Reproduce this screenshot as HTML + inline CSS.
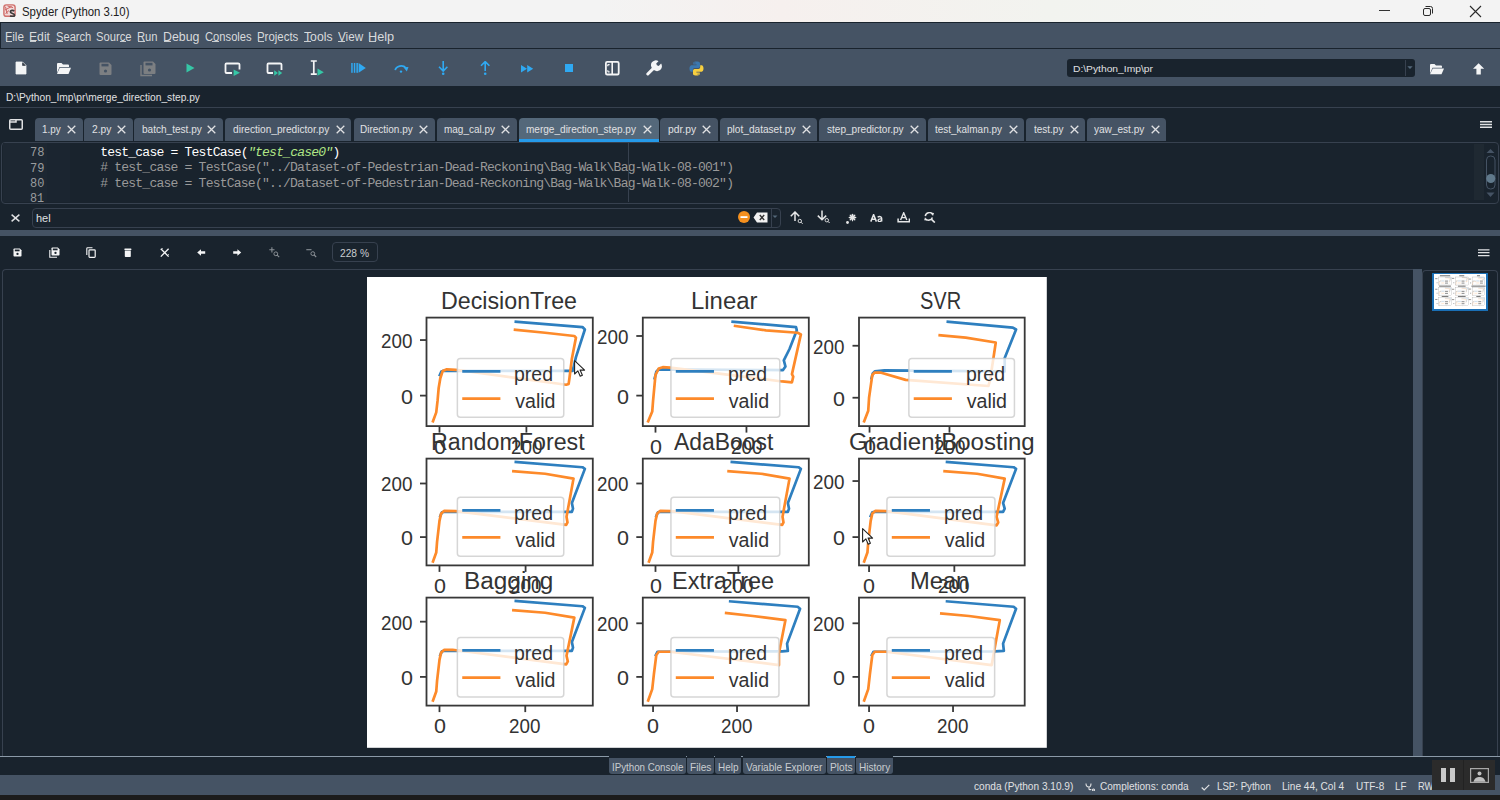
<!DOCTYPE html>
<html><head><meta charset="utf-8"><title>Spyder</title>
<style>
*{margin:0;padding:0;box-sizing:border-box}
html,body{width:1500px;height:800px;overflow:hidden;background:#19232D}
.r{position:absolute}
.t{position:absolute;white-space:nowrap;transform-origin:0 0}
</style></head><body>
<div class="r" style="left:0.0px;top:0.0px;width:1500.0px;height:22.0px;background:#f3f3f3;background:linear-gradient(90deg,#f3f3f3 0%,#f3f3f3 40%,#f6f0ee 52%,#f2f3ef 70%,#f3f3f3 85%)"></div>
<svg class="r" style="left:3.0px;top:4.3px" width="13" height="13" viewBox="0 0 13 13"><rect x="0.9" y="0.9" width="11.2" height="11.4" rx="2.4" fill="#f3dada" stroke="#d0706c" stroke-width="1.4"/><path d="M2.5 2.8 L4.2 10 M2 6 L8.5 2.5 M2.5 9.5 L6 6.5 M4.5 2 L10 3.6" stroke="#c85a57" stroke-width="0.9" fill="none"/><path d="M11.2 7.2 C10.2 5.9 7.4 6 7.4 7.8 C7.4 9.8 11.6 9.2 11.6 11.2 C11.6 12.8 8.4 12.8 7.2 11.6" stroke="#3a3a3a" stroke-width="1.7" fill="none"/></svg>
<div class="t" style="left:21.52px;top:6.00px;font-family:'Liberation Sans',sans-serif;font-size:12.21px;line-height:12.21px;color:#202020;transform:scaleX(0.9320);">Spyder (Python 3.10)</div>
<div class="r" style="left:1379.0px;top:10.0px;width:11.0px;height:1.0px;background:#333;"></div>
<svg class="r" style="left:1422.0px;top:5.0px" width="12" height="12" viewBox="0 0 12 12"><rect x="1.5" y="3.5" width="7" height="7" rx="1.5" fill="none" stroke="#2a2a2a" stroke-width="1"/><path d="M3.5 1.5 H8.5 A2 2 0 0 1 10.5 3.5 V8.5" fill="none" stroke="#2a2a2a" stroke-width="1"/></svg>
<svg class="r" style="left:1469.0px;top:5.0px" width="13" height="13" viewBox="0 0 13 13"><path d="M1 1 L12 12 M12 1 L1 12" stroke="#2a2a2a" stroke-width="1.1"/></svg>
<div class="r" style="left:0.0px;top:22.0px;width:1500.0px;height:27.0px;background:#19232D;"></div>
<div class="r" style="left:1.0px;top:23.0px;width:1499.0px;height:25.0px;background:#455364;"></div>
<div class="t" style="left:4.69px;top:30.00px;font-family:'Liberation Sans',sans-serif;font-size:13.08px;line-height:13.08px;color:#D8DADC;transform:scaleX(0.8974);">File</div>
<div class="r" style="left:5.7px;top:40.7px;width:6.5px;height:1.0px;background:#C9CDD0;"></div>
<div class="t" style="left:28.85px;top:30.00px;font-family:'Liberation Sans',sans-serif;font-size:13.08px;line-height:13.08px;color:#D8DADC;transform:scaleX(0.9302);">Edit</div>
<div class="r" style="left:29.9px;top:40.7px;width:6.5px;height:1.0px;background:#C9CDD0;"></div>
<div class="t" style="left:55.97px;top:30.00px;font-family:'Liberation Sans',sans-serif;font-size:13.08px;line-height:13.08px;color:#D8DADC;transform:scaleX(0.8523);">Search</div>
<div class="r" style="left:56.5px;top:40.7px;width:6.5px;height:1.0px;background:#C9CDD0;"></div>
<div class="t" style="left:96.26px;top:30.00px;font-family:'Liberation Sans',sans-serif;font-size:13.08px;line-height:13.08px;color:#D8DADC;transform:scaleX(0.8594);">Source</div>
<div class="r" style="left:119.6px;top:40.7px;width:6.5px;height:1.0px;background:#C9CDD0;"></div>
<div class="t" style="left:137.03px;top:30.00px;font-family:'Liberation Sans',sans-serif;font-size:13.08px;line-height:13.08px;color:#D8DADC;transform:scaleX(0.8588);">Run</div>
<div class="r" style="left:138.0px;top:40.7px;width:6.5px;height:1.0px;background:#C9CDD0;"></div>
<div class="t" style="left:162.94px;top:30.00px;font-family:'Liberation Sans',sans-serif;font-size:13.08px;line-height:13.08px;color:#D8DADC;transform:scaleX(0.9442);">Debug</div>
<div class="r" style="left:164.0px;top:40.7px;width:6.5px;height:1.0px;background:#C9CDD0;"></div>
<div class="t" style="left:204.77px;top:30.00px;font-family:'Liberation Sans',sans-serif;font-size:13.08px;line-height:13.08px;color:#D8DADC;transform:scaleX(0.8559);">Consoles</div>
<div class="r" style="left:212.4px;top:40.7px;width:6.5px;height:1.0px;background:#C9CDD0;"></div>
<div class="t" style="left:256.92px;top:30.00px;font-family:'Liberation Sans',sans-serif;font-size:13.08px;line-height:13.08px;color:#D8DADC;transform:scaleX(0.8741);">Projects</div>
<div class="r" style="left:257.9px;top:40.7px;width:6.5px;height:1.0px;background:#C9CDD0;"></div>
<div class="t" style="left:303.77px;top:30.00px;font-family:'Liberation Sans',sans-serif;font-size:13.08px;line-height:13.08px;color:#D8DADC;transform:scaleX(0.9333);">Tools</div>
<div class="r" style="left:304.0px;top:40.7px;width:6.5px;height:1.0px;background:#C9CDD0;"></div>
<div class="t" style="left:337.89px;top:30.00px;font-family:'Liberation Sans',sans-serif;font-size:13.08px;line-height:13.08px;color:#D8DADC;transform:scaleX(0.8960);">View</div>
<div class="r" style="left:338.0px;top:40.7px;width:6.5px;height:1.0px;background:#C9CDD0;"></div>
<div class="t" style="left:368.20px;top:30.00px;font-family:'Liberation Sans',sans-serif;font-size:13.08px;line-height:13.08px;color:#D8DADC;transform:scaleX(0.9734);">Help</div>
<div class="r" style="left:369.3px;top:40.7px;width:6.5px;height:1.0px;background:#C9CDD0;"></div>
<div class="r" style="left:0.0px;top:49.0px;width:1500.0px;height:37.0px;background:#455364;"></div>
<div class="r" style="left:0.0px;top:86.0px;width:1500.0px;height:21.0px;background:#19232D;"></div>
<div class="t" style="left:6.45px;top:93.00px;font-family:'Liberation Sans',sans-serif;font-size:10.47px;line-height:10.47px;color:#E0E1E3;transform:scaleX(0.9746);">D:\Python_Imp\pr\merge_direction_step.py</div>
<div class="r" style="left:0.0px;top:107.0px;width:1500.0px;height:1.0px;background:#37414F;"></div>
<div class="r" style="left:34.5px;top:118.0px;width:48.1px;height:23.0px;background:#455364;border-radius:4px 4px 0 0"></div>
<div class="t" style="left:42.18px;top:125.00px;font-family:'Liberation Sans',sans-serif;font-size:10.32px;line-height:10.32px;color:#E0E1E3;transform:scaleX(0.9600);">1.py</div>
<svg class="r" style="left:66.5px;top:125.0px" width="9" height="9" viewBox="0 0 9 9"><path d="M0.7 0.7 L8.3 8.3 M8.3 0.7 L0.7 8.3" stroke="#E0E1E3" stroke-width="1.3"/></svg>
<div class="r" style="left:84.0px;top:118.0px;width:48.5px;height:23.0px;background:#455364;border-radius:4px 4px 0 0"></div>
<div class="t" style="left:91.70px;top:125.00px;font-family:'Liberation Sans',sans-serif;font-size:10.32px;line-height:10.32px;color:#E0E1E3;transform:scaleX(0.9947);">2.py</div>
<svg class="r" style="left:116.9px;top:125.0px" width="9" height="9" viewBox="0 0 9 9"><path d="M0.7 0.7 L8.3 8.3 M8.3 0.7 L0.7 8.3" stroke="#E0E1E3" stroke-width="1.3"/></svg>
<div class="r" style="left:134.0px;top:118.0px;width:88.8px;height:23.0px;background:#455364;border-radius:4px 4px 0 0"></div>
<div class="t" style="left:141.89px;top:125.00px;font-family:'Liberation Sans',sans-serif;font-size:10.32px;line-height:10.32px;color:#E0E1E3;transform:scaleX(0.9754);">batch_test.py</div>
<svg class="r" style="left:207.3px;top:125.0px" width="9" height="9" viewBox="0 0 9 9"><path d="M0.7 0.7 L8.3 8.3 M8.3 0.7 L0.7 8.3" stroke="#E0E1E3" stroke-width="1.3"/></svg>
<div class="r" style="left:225.2px;top:118.0px;width:126.1px;height:23.0px;background:#455364;border-radius:4px 4px 0 0"></div>
<div class="t" style="left:232.83px;top:125.00px;font-family:'Liberation Sans',sans-serif;font-size:10.32px;line-height:10.32px;color:#E0E1E3;transform:scaleX(0.9814);">direction_predictor.py</div>
<svg class="r" style="left:335.9px;top:125.0px" width="9" height="9" viewBox="0 0 9 9"><path d="M0.7 0.7 L8.3 8.3 M8.3 0.7 L0.7 8.3" stroke="#E0E1E3" stroke-width="1.3"/></svg>
<div class="r" style="left:353.5px;top:118.0px;width:81.3px;height:23.0px;background:#455364;border-radius:4px 4px 0 0"></div>
<div class="t" style="left:360.15px;top:125.00px;font-family:'Liberation Sans',sans-serif;font-size:10.32px;line-height:10.32px;color:#E0E1E3;transform:scaleX(0.9689);">Direction.py</div>
<svg class="r" style="left:419.3px;top:125.0px" width="9" height="9" viewBox="0 0 9 9"><path d="M0.7 0.7 L8.3 8.3 M8.3 0.7 L0.7 8.3" stroke="#E0E1E3" stroke-width="1.3"/></svg>
<div class="r" style="left:437.2px;top:118.0px;width:79.5px;height:23.0px;background:#455364;border-radius:4px 4px 0 0"></div>
<div class="t" style="left:444.10px;top:125.00px;font-family:'Liberation Sans',sans-serif;font-size:10.32px;line-height:10.32px;color:#E0E1E3;transform:scaleX(0.9661);">mag_cal.py</div>
<svg class="r" style="left:501.2px;top:125.0px" width="9" height="9" viewBox="0 0 9 9"><path d="M0.7 0.7 L8.3 8.3 M8.3 0.7 L0.7 8.3" stroke="#E0E1E3" stroke-width="1.3"/></svg>
<div class="r" style="left:518.8px;top:118.0px;width:139.9px;height:23.0px;background:#54687A;border-radius:4px 4px 0 0"></div>
<div class="r" style="left:518.8px;top:138.6px;width:139.9px;height:3.0px;background:#259AE9;"></div>
<div class="t" style="left:526.19px;top:125.00px;font-family:'Liberation Sans',sans-serif;font-size:10.32px;line-height:10.32px;color:#E0E1E3;transform:scaleX(0.9736);">merge_direction_step.py</div>
<svg class="r" style="left:642.6px;top:125.0px" width="9" height="9" viewBox="0 0 9 9"><path d="M0.7 0.7 L8.3 8.3 M8.3 0.7 L0.7 8.3" stroke="#E0E1E3" stroke-width="1.3"/></svg>
<div class="r" style="left:660.0px;top:118.0px;width:58.0px;height:23.0px;background:#455364;border-radius:4px 4px 0 0"></div>
<div class="t" style="left:667.78px;top:125.00px;font-family:'Liberation Sans',sans-serif;font-size:10.32px;line-height:10.32px;color:#E0E1E3;transform:scaleX(0.9991);">pdr.py</div>
<svg class="r" style="left:702.0px;top:125.0px" width="9" height="9" viewBox="0 0 9 9"><path d="M0.7 0.7 L8.3 8.3 M8.3 0.7 L0.7 8.3" stroke="#E0E1E3" stroke-width="1.3"/></svg>
<div class="r" style="left:719.8px;top:118.0px;width:97.0px;height:23.0px;background:#455364;border-radius:4px 4px 0 0"></div>
<div class="t" style="left:726.59px;top:125.00px;font-family:'Liberation Sans',sans-serif;font-size:10.32px;line-height:10.32px;color:#E0E1E3;transform:scaleX(0.9795);">plot_dataset.py</div>
<svg class="r" style="left:801.8px;top:125.0px" width="9" height="9" viewBox="0 0 9 9"><path d="M0.7 0.7 L8.3 8.3 M8.3 0.7 L0.7 8.3" stroke="#E0E1E3" stroke-width="1.3"/></svg>
<div class="r" style="left:819.0px;top:118.0px;width:106.6px;height:23.0px;background:#455364;border-radius:4px 4px 0 0"></div>
<div class="t" style="left:826.76px;top:125.00px;font-family:'Liberation Sans',sans-serif;font-size:10.32px;line-height:10.32px;color:#E0E1E3;transform:scaleX(0.9752);">step_predictor.py</div>
<svg class="r" style="left:910.0px;top:125.0px" width="9" height="9" viewBox="0 0 9 9"><path d="M0.7 0.7 L8.3 8.3 M8.3 0.7 L0.7 8.3" stroke="#E0E1E3" stroke-width="1.3"/></svg>
<div class="r" style="left:927.8px;top:118.0px;width:96.0px;height:23.0px;background:#455364;border-radius:4px 4px 0 0"></div>
<div class="t" style="left:935.08px;top:125.00px;font-family:'Liberation Sans',sans-serif;font-size:10.32px;line-height:10.32px;color:#E0E1E3;transform:scaleX(0.9652);">test_kalman.py</div>
<svg class="r" style="left:1008.8px;top:125.0px" width="9" height="9" viewBox="0 0 9 9"><path d="M0.7 0.7 L8.3 8.3 M8.3 0.7 L0.7 8.3" stroke="#E0E1E3" stroke-width="1.3"/></svg>
<div class="r" style="left:1026.4px;top:118.0px;width:58.2px;height:23.0px;background:#455364;border-radius:4px 4px 0 0"></div>
<div class="t" style="left:1033.68px;top:125.00px;font-family:'Liberation Sans',sans-serif;font-size:10.32px;line-height:10.32px;color:#E0E1E3;transform:scaleX(0.9679);">test.py</div>
<svg class="r" style="left:1069.6px;top:125.0px" width="9" height="9" viewBox="0 0 9 9"><path d="M0.7 0.7 L8.3 8.3 M8.3 0.7 L0.7 8.3" stroke="#E0E1E3" stroke-width="1.3"/></svg>
<div class="r" style="left:1087.0px;top:118.0px;width:79.0px;height:23.0px;background:#455364;border-radius:4px 4px 0 0"></div>
<div class="t" style="left:1094.20px;top:125.00px;font-family:'Liberation Sans',sans-serif;font-size:10.32px;line-height:10.32px;color:#E0E1E3;transform:scaleX(0.9754);">yaw_est.py</div>
<svg class="r" style="left:1150.6px;top:125.0px" width="9" height="9" viewBox="0 0 9 9"><path d="M0.7 0.7 L8.3 8.3 M8.3 0.7 L0.7 8.3" stroke="#E0E1E3" stroke-width="1.3"/></svg>
<svg class="r" style="left:9.0px;top:119.0px" width="14" height="11" viewBox="0 0 14 11"><rect x="0.75" y="0.75" width="12.5" height="9.5" rx="1" fill="none" stroke="#E0E1E3" stroke-width="1.5"/><path d="M0.75 3 H7 L7 0.75" fill="none" stroke="#E0E1E3" stroke-width="1.5"/></svg>
<svg class="r" style="left:1480.0px;top:121.0px" width="12" height="7" viewBox="0 0 12 7"><path d="M0 0.75 H12 M0 3.5 H12 M0 6.25 H12" stroke="#E0E1E3" stroke-width="1.3"/></svg>
<div class="r" style="left:1.0px;top:141.5px;width:1497.5px;height:62.0px;background:#19232D;border:1px solid #37414F;border-radius:4px"></div>
<div class="r" style="left:3.0px;top:143.0px;width:44.0px;height:59.0px;background:#1d2732;"></div>
<div class="r" style="left:47.0px;top:143.0px;width:23.0px;height:59.0px;background:#1b2530;"></div>
<div class="t" style="left:29.73px;top:147.00px;font-family:'Liberation Mono',monospace;font-size:12.15px;line-height:12.15px;color:#9a9c9e;transform:scaleX(0.9942);">78</div>
<div class="t" style="left:29.73px;top:163.00px;font-family:'Liberation Mono',monospace;font-size:12.15px;line-height:12.15px;color:#9a9c9e;transform:scaleX(0.9942);">79</div>
<div class="t" style="left:29.86px;top:178.00px;font-family:'Liberation Mono',monospace;font-size:12.15px;line-height:12.15px;color:#9a9c9e;transform:scaleX(0.9846);">80</div>
<div class="t" style="left:29.88px;top:193.00px;font-family:'Liberation Mono',monospace;font-size:12.15px;line-height:12.15px;color:#9a9c9e;transform:scaleX(0.9660);">81</div>
<div class="t" style="left:100.16px;top:145.99px;font-family:'Liberation Mono',monospace;font-size:13.06px;line-height:13.06px;letter-spacing:-0.796px;color:#ffffff;">test_case = TestCase(</div>
<div class="t" style="left:248.00px;top:145.99px;font-family:'Liberation Mono',monospace;font-size:13.06px;line-height:13.06px;letter-spacing:-0.796px;color:#b0e686;font-style:italic;">&quot;test_case0&quot;</div>
<div class="t" style="left:332.48px;top:145.99px;font-family:'Liberation Mono',monospace;font-size:13.06px;line-height:13.06px;letter-spacing:-0.796px;color:#ffffff;">)</div>
<div class="t" style="left:100.16px;top:161.49px;font-family:'Liberation Mono',monospace;font-size:13.06px;line-height:13.06px;letter-spacing:-0.796px;color:#999999;"># test_case = TestCase(&quot;../Dataset-of-Pedestrian-Dead-Reckoning\Bag-Walk\Bag-Walk-08-001&quot;)</div>
<div class="t" style="left:100.16px;top:176.99px;font-family:'Liberation Mono',monospace;font-size:13.06px;line-height:13.06px;letter-spacing:-0.796px;color:#999999;"># test_case = TestCase(&quot;../Dataset-of-Pedestrian-Dead-Reckoning\Bag-Walk\Bag-Walk-08-002&quot;)</div>
<div class="r" style="left:628.0px;top:143.0px;width:1.0px;height:59.0px;background:#37414F;"></div>
<div class="r" style="left:1474.4px;top:144.0px;width:9.4px;height:56.0px;background:#1f2932;"></div>
<svg class="r" style="left:1485.0px;top:147.0px" width="12" height="52" viewBox="0 0 12 52"><path d="M1.5 6 L5.5 2 L9.5 6 Z" fill="#455364"/><rect x="1.5" y="9" width="8.5" height="33" rx="4" fill="none" stroke="#455364" stroke-width="1"/><circle cx="5.8" cy="31.5" r="4.5" fill="#60798B"/><path d="M1.5 45.5 L5.5 50 L9.5 45.5 Z" fill="#455364"/></svg>
<svg class="r" style="left:10.5px;top:213.7px" width="9" height="8" viewBox="0 0 9 8"><path d="M0.6 0.6 L8.4 7.4 M8.4 0.6 L0.6 7.4" stroke="#E0E1E3" stroke-width="1.4"/></svg>
<div class="r" style="left:31.5px;top:207.5px;width:749.0px;height:20.0px;background:#19232D;border:1px solid #37414F;border-radius:4px"></div>
<div class="r" style="left:770.5px;top:208.0px;width:1.0px;height:19.0px;background:#37414F;"></div>
<div class="t" style="left:36.03px;top:213.00px;font-family:'Liberation Sans',sans-serif;font-size:11.48px;line-height:11.48px;color:#E0E1E3;transform:scaleX(0.9564);">hel</div>
<svg class="r" style="left:738.0px;top:211.0px" width="12" height="12" viewBox="0 0 12 12"><circle cx="6" cy="6" r="6" fill="#F5901E"/><rect x="2.5" y="5.2" width="7" height="1.8" fill="#fff"/></svg>
<svg class="r" style="left:752.5px;top:212.0px" width="15" height="11" viewBox="0 0 15 11"><path d="M4 0.5 H14.5 V10.5 H4 L0.5 5.5 Z" fill="#f2f2f2"/><path d="M6.8 3 L11.2 8 M11.2 3 L6.8 8" stroke="#333" stroke-width="1.4"/></svg>
<svg class="r" style="left:772.0px;top:215.0px" width="6" height="4" viewBox="0 0 6 4"><path d="M0.5 0.5 L3 3 L5.5 0.5 Z" fill="#54687A"/></svg>
<div class="r" style="left:0.0px;top:230.4px;width:1500.0px;height:5.4px;background:#455364;"></div>
<div class="r" style="left:331.7px;top:242.3px;width:46.0px;height:20.0px;background:#19232D;border:1px solid #37414F;border-radius:4px"></div>
<div class="t" style="left:339.54px;top:248.00px;font-family:'Liberation Sans',sans-serif;font-size:11.19px;line-height:11.19px;color:#C9CDD0;transform:scaleX(0.9129);">228 %</div>
<div class="r" style="left:1.5px;top:269.0px;width:1411.5px;height:487.0px;background:#19232D;border:1px solid #37414F;border-right:none;border-bottom:none;border-radius:4px 0 0 0"></div>
<div class="r" style="left:1413.0px;top:268.7px;width:8.5px;height:487.3px;background:#455364;"></div>
<div class="r" style="left:1421.9px;top:269.5px;width:76.5px;height:486.5px;background:#19232D;border:1px solid #37414F;border-bottom:none;border-radius:4px 4px 0 0"></div>
<div class="r" style="left:1432.0px;top:272.7px;width:56.0px;height:38.0px;background:#1a6fb5;"></div>
<div class="r" style="left:1433.7px;top:274.3px;width:52.6px;height:34.8px;background:#ffffff;"></div>
<div class="r" style="left:0.0px;top:755.8px;width:1500.0px;height:1.2px;background:#8b9aa8;"></div>
<div class="r" style="left:608.8px;top:756.0px;width:77.2px;height:18.0px;background:#19232D;"></div>
<div class="r" style="left:608.8px;top:757.8px;width:77.2px;height:16.0px;background:#455364;border-radius:0 0 3px 3px"></div>
<div class="t" style="left:611.51px;top:762.00px;font-family:'Liberation Sans',sans-serif;font-size:10.90px;line-height:10.90px;color:#C9CDD0;transform:scaleX(0.8931);">IPython Console</div>
<div class="r" style="left:687.0px;top:756.0px;width:27.0px;height:18.0px;background:#19232D;"></div>
<div class="r" style="left:687.0px;top:757.8px;width:27.0px;height:16.0px;background:#455364;border-radius:0 0 3px 3px"></div>
<div class="t" style="left:690.09px;top:762.00px;font-family:'Liberation Sans',sans-serif;font-size:10.90px;line-height:10.90px;color:#C9CDD0;transform:scaleX(0.9295);">Files</div>
<div class="r" style="left:715.4px;top:756.0px;width:26.1px;height:18.0px;background:#19232D;"></div>
<div class="r" style="left:715.4px;top:757.8px;width:26.1px;height:16.0px;background:#455364;border-radius:0 0 3px 3px"></div>
<div class="t" style="left:718.20px;top:762.00px;font-family:'Liberation Sans',sans-serif;font-size:10.90px;line-height:10.90px;color:#C9CDD0;transform:scaleX(0.9136);">Help</div>
<div class="r" style="left:743.0px;top:756.0px;width:82.7px;height:18.0px;background:#19232D;"></div>
<div class="r" style="left:743.0px;top:757.8px;width:82.7px;height:16.0px;background:#455364;border-radius:0 0 3px 3px"></div>
<div class="t" style="left:746.40px;top:762.00px;font-family:'Liberation Sans',sans-serif;font-size:10.90px;line-height:10.90px;color:#C9CDD0;transform:scaleX(0.9224);">Variable Explorer</div>
<div class="r" style="left:826.8px;top:756.0px;width:28.4px;height:18.0px;background:#19232D;"></div>
<div class="r" style="left:826.8px;top:757.8px;width:28.4px;height:16.0px;background:#455364;border-radius:0 0 3px 3px"></div>
<div class="r" style="left:826.8px;top:755.5px;width:28.4px;height:2.2px;background:#259AE9;"></div>
<div class="t" style="left:829.58px;top:762.00px;font-family:'Liberation Sans',sans-serif;font-size:10.90px;line-height:10.90px;color:#C9CDD0;transform:scaleX(0.9355);">Plots</div>
<div class="r" style="left:856.2px;top:756.0px;width:36.8px;height:18.0px;background:#19232D;"></div>
<div class="r" style="left:856.2px;top:757.8px;width:36.8px;height:16.0px;background:#455364;border-radius:0 0 3px 3px"></div>
<div class="t" style="left:858.59px;top:762.00px;font-family:'Liberation Sans',sans-serif;font-size:10.90px;line-height:10.90px;color:#C9CDD0;transform:scaleX(0.9217);">History</div>
<div class="r" style="left:0.0px;top:775.0px;width:1500.0px;height:20.2px;background:#455364;"></div>
<div class="r" style="left:0.0px;top:795.2px;width:1500.0px;height:4.8px;background:#1c1c1c;"></div>
<div class="t" style="left:974.17px;top:780.00px;font-family:'Liberation Sans',sans-serif;font-size:11.63px;line-height:11.63px;color:#E0E1E3;transform:scaleX(0.8681);">conda (Python 3.10.9)</div>
<div class="t" style="left:1100.46px;top:780.00px;font-family:'Liberation Sans',sans-serif;font-size:11.63px;line-height:11.63px;color:#E0E1E3;transform:scaleX(0.8617);">Completions: conda</div>
<div class="t" style="left:1216.87px;top:780.00px;font-family:'Liberation Sans',sans-serif;font-size:11.63px;line-height:11.63px;color:#E0E1E3;transform:scaleX(0.8318);">LSP: Python</div>
<div class="t" style="left:1281.73px;top:780.00px;font-family:'Liberation Sans',sans-serif;font-size:11.63px;line-height:11.63px;color:#E0E1E3;transform:scaleX(0.8654);">Line 44, Col 4</div>
<div class="t" style="left:1355.55px;top:780.00px;font-family:'Liberation Sans',sans-serif;font-size:11.63px;line-height:11.63px;color:#E0E1E3;transform:scaleX(0.8569);">UTF-8</div>
<div class="t" style="left:1395.46px;top:780.00px;font-family:'Liberation Sans',sans-serif;font-size:11.63px;line-height:11.63px;color:#E0E1E3;transform:scaleX(0.8412);">LF</div>
<div class="t" style="left:1417.80px;top:780.00px;font-family:'Liberation Sans',sans-serif;font-size:11.63px;line-height:11.63px;color:#E0E1E3;transform:scaleX(0.8000);">RW</div>
<svg class="r" style="left:1201.0px;top:784.0px" width="9" height="7" viewBox="0 0 9 7"><path d="M0.7 3.5 L3.2 6 L8.3 0.8" stroke="#E0E1E3" stroke-width="1.2" fill="none"/></svg>
<svg class="r" style="left:1084.6px;top:782.0px" width="10" height="9" viewBox="0 0 10 9"><path d="M1 1.5 C1 4 2 5 4 5 M6 1.5 C6 4 5 5 4 5 M4 5 V7 C4 8 6 8 6 7 M8.5 7 A1 1 0 1 1 8.49 7" stroke="#E0E1E3" stroke-width="1.1" fill="none"/></svg>
<div class="r" style="left:1432.0px;top:759.8px;width:63.0px;height:30.6px;background:#2b2b2b;"></div>
<div class="r" style="left:1463.0px;top:759.8px;width:1.0px;height:30.6px;background:#222;"></div>
<div class="r" style="left:1440.7px;top:768.0px;width:5.0px;height:14.0px;background:#c8c8c8;"></div>
<div class="r" style="left:1449.5px;top:768.0px;width:5.0px;height:14.0px;background:#c8c8c8;"></div>
<svg class="r" style="left:1470.0px;top:768.0px" width="19" height="15" viewBox="0 0 19 15"><rect x="0.6" y="0.6" width="17.8" height="13.8" fill="none" stroke="#a8a8a8" stroke-width="1.2"/><circle cx="9.5" cy="5.5" r="2" fill="#c0c0c0"/><path d="M3.5 13.8 C4.5 10 7 9 9.5 9 C12 9 14.5 10 15.5 13.8 Z" fill="#c0c0c0"/></svg><svg class="r" style="left:15.0px;top:61.0px" width="12" height="14" viewBox="0 0 12 14"><path d="M1 1 H7.5 L11 4.5 V13 H1 Z" fill="#f4f5f6" stroke="#f4f5f6" stroke-width="0.8" stroke-linejoin="round"/><path d="M7.2 1.2 V4.8 H10.8 Z" fill="#455364"/><path d="M7.6 1.4 L10.6 4.4 H7.6 Z" fill="#3a3f45"/></svg>
<svg class="r" style="left:55.5px;top:61.5px" width="16" height="13" viewBox="0 0 16 13"><path d="M1 2 Q1 1 2 1 H5.5 L7 2.5 H12 Q13 2.5 13 3.5 V5 H3.5 L1 11 Z" fill="#f4f5f6"/><path d="M3.8 5.8 H15 L12.5 12 H1 Z" fill="#f4f5f6"/></svg>
<svg class="r" style="left:98.6px;top:61.6px" width="13" height="13.5" viewBox="0 0 13 13.5"><path d="M0.5 1.5 Q0.5 0.5 1.5 0.5 H10 L12.5 3 V12 Q12.5 13 11.5 13 H1.5 Q0.5 13 0.5 12 Z" fill="#7c7f82"/><rect x="2.5" y="1.8" width="7" height="2.6" fill="#455364"/><circle cx="6.5" cy="9" r="1.6" fill="#455364"/></svg>
<svg class="r" style="left:139.5px;top:60.5px" width="16" height="16" viewBox="0 0 16 16"><path d="M1 4 V14.5 H12" fill="none" stroke="#7c7f82" stroke-width="1.4"/><g transform="translate(3,0)"><path d="M0.5 1.5 Q0.5 0.5 1.5 0.5 H10 L12.5 3 V12 Q12.5 13 11.5 13 H1.5 Q0.5 13 0.5 12 Z" fill="#7c7f82"/><rect x="2.5" y="1.8" width="7" height="2.6" fill="#455364"/><circle cx="6.5" cy="9" r="1.6" fill="#455364"/></g></svg>
<svg class="r" style="left:186.0px;top:63.0px" width="9" height="10" viewBox="0 0 9 10"><path d="M0.5 0.5 L8.5 5 L0.5 9.5 Z" fill="#36c6a6"/></svg>
<svg class="r" style="left:223.5px;top:61.5px" width="18" height="15" viewBox="0 0 18 15"><path d="M8 11 H2.5 Q1.5 11 1.5 10 V2.5 Q1.5 1.5 2.5 1.5 H14 Q15.5 1.5 15.5 2.5 V7.5" fill="none" stroke="#f4f5f6" stroke-width="1.8"/><path d="M9.6 7.5 L16 10.8 L9.6 14 Z" fill="#36c6a6"/></svg>
<svg class="r" style="left:265.5px;top:61.5px" width="18" height="15" viewBox="0 0 18 15"><path d="M7 11 H2.5 Q1.5 11 1.5 10 V2.5 Q1.5 1.5 2.5 1.5 H14 Q15.5 1.5 15.5 2.5 V8" fill="none" stroke="#f4f5f6" stroke-width="1.8"/><path d="M8.2 8.2 L12 11 L8.2 13.7 Z M12.4 8.2 L16.2 11 L12.4 13.7 Z" fill="#36c6a6"/></svg>
<svg class="r" style="left:309.5px;top:59.5px" width="15" height="16" viewBox="0 0 15 16"><path d="M0.8 1 H6.8 M3.8 1 V14.2 M0.8 14.2 H6.8" fill="none" stroke="#f4f5f6" stroke-width="1.7"/><path d="M7.5 8.5 L13.8 12.2 L7.5 15.8 Z" fill="#36c6a6"/></svg>
<svg class="r" style="left:350.5px;top:63.2px" width="15" height="10" viewBox="0 0 15 10"><rect x="0.2" y="0" width="1.5" height="9.8" fill="#2fa9f2"/><rect x="2.8" y="0" width="1.5" height="9.8" fill="#2fa9f2"/><rect x="5.4" y="0" width="1.5" height="9.8" fill="#2fa9f2"/><path d="M7.6 0 L14.8 4.9 L7.6 9.8 Z" fill="#2fa9f2"/></svg>
<svg class="r" style="left:393.5px;top:63.5px" width="15" height="9" viewBox="0 0 15 9"><path d="M1.2 6.2 A6 5 0 0 1 12 4" fill="none" stroke="#2fa9f2" stroke-width="1.7"/><path d="M9.5 3.2 L14.5 3 L12.8 7.5 Z" fill="#2fa9f2"/><circle cx="7" cy="7.6" r="1.2" fill="#2fa9f2"/></svg>
<svg class="r" style="left:437.5px;top:61.0px" width="11" height="15" viewBox="0 0 11 15"><path d="M5.2 0 V9.5 M1 5.8 L5.2 10 L9.4 5.8" fill="none" stroke="#2fa9f2" stroke-width="1.6"/><circle cx="5.2" cy="12.8" r="1.3" fill="#2fa9f2"/></svg>
<svg class="r" style="left:479.5px;top:61.0px" width="11" height="15" viewBox="0 0 11 15"><path d="M5.2 10 V0.8 M1 4.8 L5.2 0.6 L9.4 4.8" fill="none" stroke="#2fa9f2" stroke-width="1.6"/><circle cx="5.2" cy="12.8" r="1.3" fill="#2fa9f2"/></svg>
<svg class="r" style="left:521.0px;top:64.5px" width="13" height="8" viewBox="0 0 13 8"><path d="M0 0 L6 3.8 L0 7.6 Z M6.2 0 L12.2 3.8 L6.2 7.6 Z" fill="#2fa9f2"/></svg>
<div class="r" style="left:564.6px;top:64.1px;width:8.7px;height:8.2px;background:#2fa9f2;"></div>
<svg class="r" style="left:604.5px;top:60.8px" width="15" height="15" viewBox="0 0 15 15"><rect x="0.9" y="0.9" width="12.8" height="12.6" rx="1.3" fill="none" stroke="#f4f5f6" stroke-width="1.8"/><path d="M7.2 1 V13.5" stroke="#f4f5f6" stroke-width="1.6"/><path d="M2.8 3.6 H4.6 M2.8 3.6 V5.2 M2.8 10.8 H4.6 M2.8 10.8 V9.2" stroke="#f4f5f6" stroke-width="1.2" fill="none"/></svg>
<svg class="r" style="left:646.0px;top:60.0px" width="16" height="16" viewBox="0 0 16 16"><path d="M1.8 14 L8.2 7.6" stroke="#f4f5f6" stroke-width="3" stroke-linecap="round"/><path d="M7 9 A4.6 4.6 0 0 1 12.5 1.2 L10.2 3.6 L10.9 5.3 L12.7 5.9 L15.1 3.6 A4.6 4.6 0 0 1 7 9 Z" fill="#f4f5f6"/></svg>
<svg class="r" style="left:688.5px;top:61.0px" width="15" height="15" viewBox="0 0 15 15"><path d="M7.4 0.5 C4 0.5 4.3 2 4.3 2 V3.6 H7.6 V4.2 H2.8 C2.8 4.2 0.5 4 0.5 7.5 C0.5 11 2.5 10.8 2.5 10.8 H3.8 V9.1 C3.8 9.1 3.7 7.1 5.8 7.1 H9.1 C9.1 7.1 11 7.1 11 5.3 V2.3 C11 2.3 11.3 0.5 7.4 0.5 Z" fill="#3b78b0"/><circle cx="5.9" cy="1.9" r="0.55" fill="#455364"/><path d="M7.6 14.5 C11 14.5 10.7 13 10.7 13 V11.4 H7.4 V10.8 H12.2 C12.2 10.8 14.5 11 14.5 7.5 C14.5 4 12.5 4.2 12.5 4.2 H11.2 V5.9 C11.2 5.9 11.3 7.9 9.2 7.9 H5.9 C5.9 7.9 4 7.9 4 9.7 V12.7 C4 12.7 3.7 14.5 7.6 14.5 Z" fill="#f7cf3f"/><circle cx="9.1" cy="13.1" r="0.55" fill="#455364"/></svg>
<div class="r" style="left:1067.0px;top:58.5px;width:348.0px;height:18.6px;background:#19232D;border-radius:3px"></div>
<div class="r" style="left:1404.5px;top:60.0px;width:1.0px;height:15.6px;background:#37414F;"></div>
<svg class="r" style="left:1406.5px;top:66.0px" width="6" height="4" viewBox="0 0 6 4"><path d="M0.3 0.3 L3 3 L5.7 0.3 Z" fill="#54687A"/></svg>
<svg class="r" style="left:1429.0px;top:62.5px" width="16" height="12" viewBox="0 0 16 12"><path d="M1 2 Q1 1 2 1 H5.5 L7 2.5 H12 Q13 2.5 13 3.5 V4.8 H3.5 L1 10.5 Z" fill="#f4f5f6"/><path d="M3.8 5.5 H15 L12.5 11.3 H1 Z" fill="#f4f5f6"/></svg>
<svg class="r" style="left:1472.8px;top:62.8px" width="12" height="12" viewBox="0 0 12 12"><path d="M5.6 0.2 L11.2 5.8 H7.8 V11.4 H3.4 V5.8 H0 Z" fill="#f4f5f6"/></svg>
<svg class="r" style="left:12.7px;top:247.9px" width="9" height="9" viewBox="0 0 9 9"><path d="M0.5 1.3 Q0.5 0.5 1.3 0.5 H6.8 L8.5 2.2 V7.7 Q8.5 8.5 7.7 8.5 H1.3 Q0.5 8.5 0.5 7.7 Z" fill="#f4f5f6"/><rect x="1.8" y="1.5" width="4.8" height="1.8" fill="#19232D"/><circle cx="4.5" cy="5.9" r="1.15" fill="#19232D"/></svg>
<svg class="r" style="left:48.5px;top:246.8px" width="11" height="11" viewBox="0 0 11 11"><path d="M0.8 3 V10.2 H8" fill="none" stroke="#f4f5f6" stroke-width="1.1"/><g transform="translate(2,0)"><path d="M0.5 1.3 Q0.5 0.5 1.3 0.5 H6.8 L8.5 2.2 V7.7 Q8.5 8.5 7.7 8.5 H1.3 Q0.5 8.5 0.5 7.7 Z" fill="#f4f5f6"/><rect x="1.8" y="1.5" width="4.8" height="1.8" fill="#19232D"/><circle cx="4.5" cy="5.9" r="1.15" fill="#19232D"/></g></svg>
<svg class="r" style="left:85.5px;top:246.6px" width="10" height="11" viewBox="0 0 10 11"><path d="M0.8 8 V1.5 Q0.8 0.7 1.6 0.7 H6.5" fill="none" stroke="#f4f5f6" stroke-width="1.1"/><rect x="3" y="2.8" width="6.2" height="7.6" rx="0.8" fill="none" stroke="#f4f5f6" stroke-width="1.2"/></svg>
<svg class="r" style="left:123.5px;top:247.5px" width="8" height="9.5" viewBox="0 0 8 9.5"><rect x="0.4" y="0.4" width="7" height="1.5" rx="0.5" fill="#f4f5f6"/><path d="M0.8 2.6 H6.8 V8.2 Q6.8 9 6 9 H1.6 Q0.8 9 0.8 8.2 Z" fill="#f4f5f6"/></svg>
<svg class="r" style="left:159.6px;top:248.0px" width="10" height="9.5" viewBox="0 0 10 9.5"><path d="M0.8 0.8 L8.6 8.6 M8.6 0.8 L0.8 8.6" stroke="#f4f5f6" stroke-width="1.3"/><path d="M2.5 0.2 L1.2 1.5 M7.2 7.8 L8.8 6.4" stroke="#f4f5f6" stroke-width="1"/></svg>
<svg class="r" style="left:197.0px;top:248.7px" width="9" height="7.5" viewBox="0 0 9 7.5"><path d="M0.2 3.5 L4 0.2 V2.2 H8.2 V4.8 H4 V6.8 Z" fill="#f4f5f6"/></svg>
<svg class="r" style="left:233.4px;top:248.7px" width="9" height="7.5" viewBox="0 0 9 7.5"><path d="M8.2 3.5 L4.4 0.2 V2.2 H0.2 V4.8 H4.4 V6.8 Z" fill="#f4f5f6"/></svg>
<svg class="r" style="left:269.0px;top:247.0px" width="11" height="11" viewBox="0 0 11 11"><path d="M0.3 2.8 H5.5 M2.9 0.2 V5.6" stroke="#8a9096" stroke-width="1.1"/><circle cx="6.8" cy="6.8" r="1.9" fill="none" stroke="#8a9096" stroke-width="1"/><path d="M8.2 8.2 L10.2 10.2" stroke="#8a9096" stroke-width="1.1"/></svg>
<svg class="r" style="left:305.5px;top:249.3px" width="11" height="9" viewBox="0 0 11 9"><path d="M0.3 0.7 H5.5" stroke="#8a9096" stroke-width="1.1"/><circle cx="6.8" cy="4.6" r="1.9" fill="none" stroke="#8a9096" stroke-width="1"/><path d="M8.2 6 L10.2 8" stroke="#8a9096" stroke-width="1.1"/></svg>
<svg class="r" style="left:1477.5px;top:248.5px" width="12" height="8" viewBox="0 0 12 8"><path d="M0 0.8 H11.5 M0 3.7 H11.5 M0 6.6 H11.5" stroke="#E0E1E3" stroke-width="1.3"/></svg>
<svg class="r" style="left:790.0px;top:210.5px" width="15" height="14" viewBox="0 0 15 14"><path d="M5 10 V1 M0.8 5.2 L5 1 L9.2 5.2" fill="none" stroke="#E6E7E8" stroke-width="1.5"/><circle cx="9.8" cy="10" r="1.7" fill="none" stroke="#E6E7E8" stroke-width="0.9"/><path d="M11 11.2 L12.6 12.8" stroke="#E6E7E8" stroke-width="1"/></svg>
<svg class="r" style="left:816.8px;top:210.0px" width="15" height="14" viewBox="0 0 15 14"><path d="M5 0.5 V9.8 M0.8 5.6 L5 9.8 L9.2 5.6" fill="none" stroke="#E6E7E8" stroke-width="1.5"/><circle cx="9.8" cy="10.2" r="1.7" fill="none" stroke="#E6E7E8" stroke-width="0.9"/><path d="M11 11.4 L12.6 13" stroke="#E6E7E8" stroke-width="1"/></svg>
<svg class="r" style="left:845.5px;top:212.6px" width="12" height="11" viewBox="0 0 12 11"><circle cx="1.5" cy="9.5" r="1.4" fill="#E6E7E8"/><g transform="translate(2,0)"><path d="M4.5 4.5 L7.70 4.50" stroke="#E6E7E8" stroke-width="1.3" stroke-linecap="round"/><path d="M4.5 4.5 L6.76 6.76" stroke="#E6E7E8" stroke-width="1.3" stroke-linecap="round"/><path d="M4.5 4.5 L4.50 7.70" stroke="#E6E7E8" stroke-width="1.3" stroke-linecap="round"/><path d="M4.5 4.5 L2.24 6.76" stroke="#E6E7E8" stroke-width="1.3" stroke-linecap="round"/><path d="M4.5 4.5 L1.30 4.50" stroke="#E6E7E8" stroke-width="1.3" stroke-linecap="round"/><path d="M4.5 4.5 L2.24 2.24" stroke="#E6E7E8" stroke-width="1.3" stroke-linecap="round"/><path d="M4.5 4.5 L4.50 1.30" stroke="#E6E7E8" stroke-width="1.3" stroke-linecap="round"/><path d="M4.5 4.5 L6.76 2.24" stroke="#E6E7E8" stroke-width="1.3" stroke-linecap="round"/><circle cx="4.5" cy="4.5" r="2.3" fill="#E6E7E8"/></g></svg>
<svg class="r" style="left:870.0px;top:213.5px" width="13" height="8.5" viewBox="0 0 13 8.5"><path d="M0.8 7.6 L3.6 0.6 L6.4 7.6 M1.9 5.2 H5.3" fill="none" stroke="#E6E7E8" stroke-width="1.5"/><path d="M7.6 3.2 Q9.2 2 10.8 2.8 Q11.7 3.3 11.7 4.5 V7.6 M11.5 4.9 Q8.4 4.6 8.1 6.2 Q8.1 7.7 9.7 7.6 Q11.1 7.4 11.6 6.4" fill="none" stroke="#E6E7E8" stroke-width="1.4"/></svg>
<svg class="r" style="left:896.5px;top:211.8px" width="13.5" height="11" viewBox="0 0 13.5 11"><path d="M3.6 8 L6.7 0.8 L9.8 8 M4.7 5.6 H8.7" fill="none" stroke="#E6E7E8" stroke-width="1.4"/><path d="M1.1 6.5 V9.7 H12.4 V6.5" fill="none" stroke="#E6E7E8" stroke-width="1.5"/></svg>
<svg class="r" style="left:924.0px;top:212.2px" width="12.5" height="11" viewBox="0 0 12.5 11"><path d="M1.3 4.2 A4.1 4.1 0 0 1 8.6 2.2 M8.4 5.4 A4.1 4.1 0 0 1 1.6 7" fill="none" stroke="#E6E7E8" stroke-width="1.5"/><path d="M6.6 0.4 L10 0.9 L9 3.9 Z M3.4 8.6 L0.2 8.2 L1 5.2 Z" fill="#E6E7E8"/><path d="M7.3 7.1 L10.8 10.6" stroke="#E6E7E8" stroke-width="1.6"/></svg><div class="t" style="left:1073.00px;top:64.00px;font-family:'Liberation Sans',sans-serif;font-size:9.59px;line-height:9.59px;color:#E0E1E3;transform:scaleX(1.0716);">D:\Python_Imp\pr</div><svg class="r" style="left:0;top:0" width="1500" height="800" viewBox="0 0 1500 800"><rect x="367" y="277" width="679.8" height="470.8" fill="#ffffff"/><clipPath id="clip00"><rect x="426.50" y="317.60" width="166.30" height="108.50"/></clipPath><polyline clip-path="url(#clip00)" points="439.82,374.98 441.44,371.40 442.74,370.92 572.70,370.92 575.95,357.11 584.88,329.49 582.44,327.06 515.84,321.70" fill="none" stroke="#2e7fbf" stroke-width="2.7" stroke-linejoin="round" stroke-linecap="square"/><polyline clip-path="url(#clip00)" points="433.00,421.27 436.24,412.34 437.54,400.97 438.68,387.97 440.31,378.23 442.74,370.92 446.80,369.29 455.74,369.78 566.20,384.72 568.64,383.91 569.45,378.23 571.88,358.73 575.95,337.62 574.32,335.99 545.08,332.74 515.03,329.82" fill="none" stroke="#fd8a2a" stroke-width="2.7" stroke-linejoin="round" stroke-linecap="square"/><rect x="457.36" y="358.41" width="106.40" height="58.80" rx="3" fill="rgba(255,255,255,0.8)" stroke="rgba(204,204,204,0.8)" stroke-width="1.5"/><line x1="462.24" y1="371.40" x2="500.41" y2="371.40" stroke="#2e7fbf" stroke-width="2.7"/><line x1="462.24" y1="398.53" x2="500.41" y2="398.53" stroke="#fd8a2a" stroke-width="2.7"/><rect x="426.50" y="317.60" width="166.30" height="108.50" fill="none" stroke="#383838" stroke-width="1.8"/><line x1="420.00" y1="340.05" x2="426.50" y2="340.05" stroke="#383838" stroke-width="1.8"/><line x1="420.00" y1="395.61" x2="426.50" y2="395.61" stroke="#383838" stroke-width="1.8"/><line x1="439.49" y1="426.10" x2="439.49" y2="432.60" stroke="#383838" stroke-width="1.8"/><line x1="526.40" y1="426.10" x2="526.40" y2="432.60" stroke="#383838" stroke-width="1.8"/><clipPath id="clip10"><rect x="642.80" y="317.60" width="166.00" height="108.50"/></clipPath><polyline clip-path="url(#clip10)" points="654.68,378.23 656.31,371.73 658.74,369.29 783.01,370.10 785.45,366.53 783.82,360.36 789.51,348.99 796.82,330.31 796.01,327.06 732.65,321.70" fill="none" stroke="#2e7fbf" stroke-width="2.7" stroke-linejoin="round" stroke-linecap="square"/><polyline clip-path="url(#clip10)" points="648.18,421.27 652.24,411.53 653.06,400.97 655.49,374.98 658.74,368.48 662.80,367.18 670.11,367.67 782.20,381.47 791.95,382.29 793.24,376.60 791.95,374.17 800.88,334.37 797.63,332.74 765.95,330.31 735.09,325.92" fill="none" stroke="#fd8a2a" stroke-width="2.7" stroke-linejoin="round" stroke-linecap="square"/><rect x="670.93" y="358.41" width="108.84" height="58.80" rx="3" fill="rgba(255,255,255,0.8)" stroke="rgba(204,204,204,0.8)" stroke-width="1.5"/><line x1="675.80" y1="371.40" x2="713.97" y2="371.40" stroke="#2e7fbf" stroke-width="2.7"/><line x1="675.80" y1="398.53" x2="713.97" y2="398.53" stroke="#fd8a2a" stroke-width="2.7"/><rect x="642.80" y="317.60" width="166.00" height="108.50" fill="none" stroke="#383838" stroke-width="1.8"/><line x1="636.30" y1="335.99" x2="642.80" y2="335.99" stroke="#383838" stroke-width="1.8"/><line x1="636.30" y1="395.61" x2="642.80" y2="395.61" stroke="#383838" stroke-width="1.8"/><line x1="655.49" y1="426.10" x2="655.49" y2="432.60" stroke="#383838" stroke-width="1.8"/><line x1="746.46" y1="426.10" x2="746.46" y2="432.60" stroke="#383838" stroke-width="1.8"/><clipPath id="clip20"><rect x="859.00" y="317.60" width="165.70" height="108.50"/></clipPath><polyline clip-path="url(#clip20)" points="871.49,378.23 872.79,373.35 874.74,371.40 884.49,370.43 1004.70,371.40 1004.70,357.92 1016.07,329.49 1012.82,327.54 947.84,321.70" fill="none" stroke="#2e7fbf" stroke-width="2.7" stroke-linejoin="round" stroke-linecap="square"/><polyline clip-path="url(#clip20)" points="864.18,421.27 868.24,410.71 869.06,397.72 870.68,386.35 872.31,374.98 874.74,372.54 880.43,372.54 905.61,379.85 988.45,386.02 990.08,379.85 993.33,358.73 995.76,342.49 965.71,337.62 939.72,335.18" fill="none" stroke="#fd8a2a" stroke-width="2.7" stroke-linejoin="round" stroke-linecap="square"/><rect x="908.86" y="358.41" width="105.59" height="58.80" rx="3" fill="rgba(255,255,255,0.8)" stroke="rgba(204,204,204,0.8)" stroke-width="1.5"/><line x1="913.73" y1="371.40" x2="951.90" y2="371.40" stroke="#2e7fbf" stroke-width="2.7"/><line x1="913.73" y1="398.53" x2="951.90" y2="398.53" stroke="#fd8a2a" stroke-width="2.7"/><rect x="859.00" y="317.60" width="165.70" height="108.50" fill="none" stroke="#383838" stroke-width="1.8"/><line x1="852.50" y1="345.74" x2="859.00" y2="345.74" stroke="#383838" stroke-width="1.8"/><line x1="852.50" y1="397.72" x2="859.00" y2="397.72" stroke="#383838" stroke-width="1.8"/><line x1="869.54" y1="426.10" x2="869.54" y2="432.60" stroke="#383838" stroke-width="1.8"/><line x1="949.47" y1="426.10" x2="949.47" y2="432.60" stroke="#383838" stroke-width="1.8"/><clipPath id="clip01"><rect x="426.50" y="458.60" width="166.30" height="106.80"/></clipPath><polyline clip-path="url(#clip01)" points="440.31,515.98 441.93,512.40 443.55,511.92 571.88,511.92 573.02,508.67 571.88,502.98 584.88,468.87 582.44,467.24 515.84,462.05" fill="none" stroke="#2e7fbf" stroke-width="2.7" stroke-linejoin="round" stroke-linecap="square"/><polyline clip-path="url(#clip01)" points="433.00,561.46 436.24,552.53 437.06,541.97 439.49,520.85 441.12,513.54 444.37,510.78 455.74,511.10 566.20,524.91 567.50,522.47 566.52,516.79 573.51,478.62 545.08,473.74 513.40,471.31" fill="none" stroke="#fd8a2a" stroke-width="2.7" stroke-linejoin="round" stroke-linecap="square"/><rect x="457.36" y="497.30" width="106.40" height="58.97" rx="3" fill="rgba(255,255,255,0.8)" stroke="rgba(204,204,204,0.8)" stroke-width="1.5"/><line x1="462.24" y1="510.29" x2="500.41" y2="510.29" stroke="#2e7fbf" stroke-width="2.7"/><line x1="462.24" y1="537.42" x2="500.41" y2="537.42" stroke="#fd8a2a" stroke-width="2.7"/><rect x="426.50" y="458.60" width="166.30" height="106.80" fill="none" stroke="#383838" stroke-width="1.8"/><line x1="420.00" y1="483.49" x2="426.50" y2="483.49" stroke="#383838" stroke-width="1.8"/><line x1="420.00" y1="537.09" x2="426.50" y2="537.09" stroke="#383838" stroke-width="1.8"/><line x1="439.49" y1="565.40" x2="439.49" y2="571.90" stroke="#383838" stroke-width="1.8"/><line x1="525.59" y1="565.40" x2="525.59" y2="571.90" stroke="#383838" stroke-width="1.8"/><clipPath id="clip11"><rect x="642.80" y="458.60" width="166.00" height="106.80"/></clipPath><polyline clip-path="url(#clip11)" points="656.31,515.98 657.93,512.40 659.55,511.92 787.88,511.92 789.02,508.67 787.88,502.98 800.88,468.87 798.44,467.24 731.84,462.05" fill="none" stroke="#2e7fbf" stroke-width="2.7" stroke-linejoin="round" stroke-linecap="square"/><polyline clip-path="url(#clip11)" points="649.00,561.46 652.24,552.53 653.06,541.97 655.49,520.85 657.12,513.54 660.37,510.78 671.74,511.10 782.20,524.91 783.50,522.47 782.52,516.79 789.51,478.62 761.08,473.74 728.59,471.31" fill="none" stroke="#fd8a2a" stroke-width="2.7" stroke-linejoin="round" stroke-linecap="square"/><rect x="670.93" y="497.30" width="108.84" height="58.97" rx="3" fill="rgba(255,255,255,0.8)" stroke="rgba(204,204,204,0.8)" stroke-width="1.5"/><line x1="675.80" y1="510.29" x2="713.97" y2="510.29" stroke="#2e7fbf" stroke-width="2.7"/><line x1="675.80" y1="537.42" x2="713.97" y2="537.42" stroke="#fd8a2a" stroke-width="2.7"/><rect x="642.80" y="458.60" width="166.00" height="106.80" fill="none" stroke="#383838" stroke-width="1.8"/><line x1="636.30" y1="483.49" x2="642.80" y2="483.49" stroke="#383838" stroke-width="1.8"/><line x1="636.30" y1="537.09" x2="642.80" y2="537.09" stroke="#383838" stroke-width="1.8"/><line x1="655.49" y1="565.40" x2="655.49" y2="571.90" stroke="#383838" stroke-width="1.8"/><line x1="738.34" y1="565.40" x2="738.34" y2="571.90" stroke="#383838" stroke-width="1.8"/><clipPath id="clip21"><rect x="859.00" y="458.60" width="165.70" height="106.80"/></clipPath><polyline clip-path="url(#clip21)" points="870.68,515.98 872.31,512.40 874.74,511.92 1003.07,511.92 1004.70,508.67 1003.07,502.98 1016.07,468.87 1013.63,467.24 947.03,462.05" fill="none" stroke="#2e7fbf" stroke-width="2.7" stroke-linejoin="round" stroke-linecap="square"/><polyline clip-path="url(#clip21)" points="864.18,561.46 867.43,552.53 868.24,541.97 870.68,520.85 872.31,513.54 875.55,510.78 886.11,511.10 996.57,525.40 998.20,522.47 996.57,516.79 1004.70,478.62 977.08,473.74 944.59,471.31" fill="none" stroke="#fd8a2a" stroke-width="2.7" stroke-linejoin="round" stroke-linecap="square"/><rect x="886.93" y="497.30" width="108.02" height="58.97" rx="3" fill="rgba(255,255,255,0.8)" stroke="rgba(204,204,204,0.8)" stroke-width="1.5"/><line x1="891.80" y1="510.29" x2="929.97" y2="510.29" stroke="#2e7fbf" stroke-width="2.7"/><line x1="891.80" y1="537.42" x2="929.97" y2="537.42" stroke="#fd8a2a" stroke-width="2.7"/><rect x="859.00" y="458.60" width="165.70" height="106.80" fill="none" stroke="#383838" stroke-width="1.8"/><line x1="852.50" y1="481.05" x2="859.00" y2="481.05" stroke="#383838" stroke-width="1.8"/><line x1="852.50" y1="537.09" x2="859.00" y2="537.09" stroke="#383838" stroke-width="1.8"/><line x1="869.06" y1="565.40" x2="869.06" y2="571.90" stroke="#383838" stroke-width="1.8"/><line x1="954.34" y1="565.40" x2="954.34" y2="571.90" stroke="#383838" stroke-width="1.8"/><clipPath id="clip02"><rect x="426.50" y="597.60" width="166.30" height="108.00"/></clipPath><polyline clip-path="url(#clip02)" points="440.31,654.98 441.93,651.40 443.55,650.92 571.88,650.92 573.02,647.67 571.88,641.98 584.88,607.87 582.44,606.24 515.84,601.05" fill="none" stroke="#2e7fbf" stroke-width="2.7" stroke-linejoin="round" stroke-linecap="square"/><polyline clip-path="url(#clip02)" points="433.00,700.46 436.24,691.53 437.06,680.97 439.49,659.85 441.12,652.54 444.37,649.78 452.49,649.78 566.20,664.40 567.82,661.47 566.52,655.79 574.32,617.62 545.08,612.74 513.40,610.31" fill="none" stroke="#fd8a2a" stroke-width="2.7" stroke-linejoin="round" stroke-linecap="square"/><rect x="457.36" y="637.43" width="106.40" height="59.45" rx="3" fill="rgba(255,255,255,0.8)" stroke="rgba(204,204,204,0.8)" stroke-width="1.5"/><line x1="462.24" y1="650.43" x2="500.41" y2="650.43" stroke="#2e7fbf" stroke-width="2.7"/><line x1="462.24" y1="677.56" x2="500.41" y2="677.56" stroke="#fd8a2a" stroke-width="2.7"/><rect x="426.50" y="597.60" width="166.30" height="108.00" fill="none" stroke="#383838" stroke-width="1.8"/><line x1="420.00" y1="621.68" x2="426.50" y2="621.68" stroke="#383838" stroke-width="1.8"/><line x1="420.00" y1="676.91" x2="426.50" y2="676.91" stroke="#383838" stroke-width="1.8"/><line x1="439.49" y1="705.60" x2="439.49" y2="712.10" stroke="#383838" stroke-width="1.8"/><line x1="525.26" y1="705.60" x2="525.26" y2="712.10" stroke="#383838" stroke-width="1.8"/><clipPath id="clip12"><rect x="642.80" y="597.60" width="166.00" height="108.00"/></clipPath><polyline clip-path="url(#clip12)" points="655.82,654.98 657.44,651.73 782.20,651.40 787.88,650.92 787.07,643.61 800.07,608.68 797.63,606.73 730.22,601.37" fill="none" stroke="#2e7fbf" stroke-width="2.7" stroke-linejoin="round" stroke-linecap="square"/><polyline clip-path="url(#clip12)" points="648.18,700.46 652.24,689.09 653.87,674.47 656.31,654.98 658.74,651.73 670.11,651.73 778.95,665.05 778.95,653.35 785.45,620.05 752.96,615.99 726.16,613.07" fill="none" stroke="#fd8a2a" stroke-width="2.7" stroke-linejoin="round" stroke-linecap="square"/><rect x="670.93" y="637.43" width="108.02" height="59.45" rx="3" fill="rgba(255,255,255,0.8)" stroke="rgba(204,204,204,0.8)" stroke-width="1.5"/><line x1="675.80" y1="650.43" x2="713.97" y2="650.43" stroke="#2e7fbf" stroke-width="2.7"/><line x1="675.80" y1="677.56" x2="713.97" y2="677.56" stroke="#fd8a2a" stroke-width="2.7"/><rect x="642.80" y="597.60" width="166.00" height="108.00" fill="none" stroke="#383838" stroke-width="1.8"/><line x1="636.30" y1="623.30" x2="642.80" y2="623.30" stroke="#383838" stroke-width="1.8"/><line x1="636.30" y1="676.91" x2="642.80" y2="676.91" stroke="#383838" stroke-width="1.8"/><line x1="653.06" y1="705.60" x2="653.06" y2="712.10" stroke="#383838" stroke-width="1.8"/><line x1="737.04" y1="705.60" x2="737.04" y2="712.10" stroke="#383838" stroke-width="1.8"/><clipPath id="clip22"><rect x="859.00" y="597.60" width="165.70" height="108.00"/></clipPath><polyline clip-path="url(#clip22)" points="871.82,654.98 873.44,651.73 994.95,651.40 1003.88,650.92 1003.07,643.61 1016.07,608.68 1013.63,606.73 947.03,601.37" fill="none" stroke="#2e7fbf" stroke-width="2.7" stroke-linejoin="round" stroke-linecap="square"/><polyline clip-path="url(#clip22)" points="864.18,700.46 868.24,689.09 869.87,674.47 872.31,654.98 874.74,651.73 886.11,651.73 991.70,665.05 994.95,646.86 999.82,620.05 968.96,615.99 941.34,613.55" fill="none" stroke="#fd8a2a" stroke-width="2.7" stroke-linejoin="round" stroke-linecap="square"/><rect x="886.93" y="637.43" width="107.70" height="59.45" rx="3" fill="rgba(255,255,255,0.8)" stroke="rgba(204,204,204,0.8)" stroke-width="1.5"/><line x1="891.80" y1="650.43" x2="929.97" y2="650.43" stroke="#2e7fbf" stroke-width="2.7"/><line x1="891.80" y1="677.56" x2="929.97" y2="677.56" stroke="#fd8a2a" stroke-width="2.7"/><rect x="859.00" y="597.60" width="165.70" height="108.00" fill="none" stroke="#383838" stroke-width="1.8"/><line x1="852.50" y1="623.30" x2="859.00" y2="623.30" stroke="#383838" stroke-width="1.8"/><line x1="852.50" y1="676.91" x2="859.00" y2="676.91" stroke="#383838" stroke-width="1.8"/><line x1="869.06" y1="705.60" x2="869.06" y2="712.10" stroke="#383838" stroke-width="1.8"/><line x1="953.04" y1="705.60" x2="953.04" y2="712.10" stroke="#383838" stroke-width="1.8"/></svg><svg class="r" style="left:1433.7px;top:274.3px" width="52.6" height="34.8" viewBox="367 277 679.8 470.8" preserveAspectRatio="none"><rect x="367" y="277" width="679.8" height="470.8" fill="#ffffff"/><clipPath id="tclip00"><rect x="426.50" y="317.60" width="166.30" height="108.50"/></clipPath><polyline clip-path="url(#tclip00)" points="439.82,374.98 441.44,371.40 442.74,370.92 572.70,370.92 575.95,357.11 584.88,329.49 582.44,327.06 515.84,321.70" fill="none" stroke="#2e7fbf" stroke-width="2.7" stroke-linejoin="round" stroke-linecap="square"/><polyline clip-path="url(#tclip00)" points="433.00,421.27 436.24,412.34 437.54,400.97 438.68,387.97 440.31,378.23 442.74,370.92 446.80,369.29 455.74,369.78 566.20,384.72 568.64,383.91 569.45,378.23 571.88,358.73 575.95,337.62 574.32,335.99 545.08,332.74 515.03,329.82" fill="none" stroke="#fd8a2a" stroke-width="2.7" stroke-linejoin="round" stroke-linecap="square"/><rect x="457.36" y="358.41" width="106.40" height="58.80" rx="3" fill="rgba(255,255,255,0.8)" stroke="rgba(204,204,204,0.8)" stroke-width="1.5"/><line x1="462.24" y1="371.40" x2="500.41" y2="371.40" stroke="#2e7fbf" stroke-width="2.7"/><line x1="462.24" y1="398.53" x2="500.41" y2="398.53" stroke="#fd8a2a" stroke-width="2.7"/><rect x="426.50" y="317.60" width="166.30" height="108.50" fill="none" stroke="#383838" stroke-width="1.8"/><line x1="420.00" y1="340.05" x2="426.50" y2="340.05" stroke="#383838" stroke-width="1.8"/><line x1="420.00" y1="395.61" x2="426.50" y2="395.61" stroke="#383838" stroke-width="1.8"/><line x1="439.49" y1="426.10" x2="439.49" y2="432.60" stroke="#383838" stroke-width="1.8"/><line x1="526.40" y1="426.10" x2="526.40" y2="432.60" stroke="#383838" stroke-width="1.8"/><clipPath id="tclip10"><rect x="642.80" y="317.60" width="166.00" height="108.50"/></clipPath><polyline clip-path="url(#tclip10)" points="654.68,378.23 656.31,371.73 658.74,369.29 783.01,370.10 785.45,366.53 783.82,360.36 789.51,348.99 796.82,330.31 796.01,327.06 732.65,321.70" fill="none" stroke="#2e7fbf" stroke-width="2.7" stroke-linejoin="round" stroke-linecap="square"/><polyline clip-path="url(#tclip10)" points="648.18,421.27 652.24,411.53 653.06,400.97 655.49,374.98 658.74,368.48 662.80,367.18 670.11,367.67 782.20,381.47 791.95,382.29 793.24,376.60 791.95,374.17 800.88,334.37 797.63,332.74 765.95,330.31 735.09,325.92" fill="none" stroke="#fd8a2a" stroke-width="2.7" stroke-linejoin="round" stroke-linecap="square"/><rect x="670.93" y="358.41" width="108.84" height="58.80" rx="3" fill="rgba(255,255,255,0.8)" stroke="rgba(204,204,204,0.8)" stroke-width="1.5"/><line x1="675.80" y1="371.40" x2="713.97" y2="371.40" stroke="#2e7fbf" stroke-width="2.7"/><line x1="675.80" y1="398.53" x2="713.97" y2="398.53" stroke="#fd8a2a" stroke-width="2.7"/><rect x="642.80" y="317.60" width="166.00" height="108.50" fill="none" stroke="#383838" stroke-width="1.8"/><line x1="636.30" y1="335.99" x2="642.80" y2="335.99" stroke="#383838" stroke-width="1.8"/><line x1="636.30" y1="395.61" x2="642.80" y2="395.61" stroke="#383838" stroke-width="1.8"/><line x1="655.49" y1="426.10" x2="655.49" y2="432.60" stroke="#383838" stroke-width="1.8"/><line x1="746.46" y1="426.10" x2="746.46" y2="432.60" stroke="#383838" stroke-width="1.8"/><clipPath id="tclip20"><rect x="859.00" y="317.60" width="165.70" height="108.50"/></clipPath><polyline clip-path="url(#tclip20)" points="871.49,378.23 872.79,373.35 874.74,371.40 884.49,370.43 1004.70,371.40 1004.70,357.92 1016.07,329.49 1012.82,327.54 947.84,321.70" fill="none" stroke="#2e7fbf" stroke-width="2.7" stroke-linejoin="round" stroke-linecap="square"/><polyline clip-path="url(#tclip20)" points="864.18,421.27 868.24,410.71 869.06,397.72 870.68,386.35 872.31,374.98 874.74,372.54 880.43,372.54 905.61,379.85 988.45,386.02 990.08,379.85 993.33,358.73 995.76,342.49 965.71,337.62 939.72,335.18" fill="none" stroke="#fd8a2a" stroke-width="2.7" stroke-linejoin="round" stroke-linecap="square"/><rect x="908.86" y="358.41" width="105.59" height="58.80" rx="3" fill="rgba(255,255,255,0.8)" stroke="rgba(204,204,204,0.8)" stroke-width="1.5"/><line x1="913.73" y1="371.40" x2="951.90" y2="371.40" stroke="#2e7fbf" stroke-width="2.7"/><line x1="913.73" y1="398.53" x2="951.90" y2="398.53" stroke="#fd8a2a" stroke-width="2.7"/><rect x="859.00" y="317.60" width="165.70" height="108.50" fill="none" stroke="#383838" stroke-width="1.8"/><line x1="852.50" y1="345.74" x2="859.00" y2="345.74" stroke="#383838" stroke-width="1.8"/><line x1="852.50" y1="397.72" x2="859.00" y2="397.72" stroke="#383838" stroke-width="1.8"/><line x1="869.54" y1="426.10" x2="869.54" y2="432.60" stroke="#383838" stroke-width="1.8"/><line x1="949.47" y1="426.10" x2="949.47" y2="432.60" stroke="#383838" stroke-width="1.8"/><clipPath id="tclip01"><rect x="426.50" y="458.60" width="166.30" height="106.80"/></clipPath><polyline clip-path="url(#tclip01)" points="440.31,515.98 441.93,512.40 443.55,511.92 571.88,511.92 573.02,508.67 571.88,502.98 584.88,468.87 582.44,467.24 515.84,462.05" fill="none" stroke="#2e7fbf" stroke-width="2.7" stroke-linejoin="round" stroke-linecap="square"/><polyline clip-path="url(#tclip01)" points="433.00,561.46 436.24,552.53 437.06,541.97 439.49,520.85 441.12,513.54 444.37,510.78 455.74,511.10 566.20,524.91 567.50,522.47 566.52,516.79 573.51,478.62 545.08,473.74 513.40,471.31" fill="none" stroke="#fd8a2a" stroke-width="2.7" stroke-linejoin="round" stroke-linecap="square"/><rect x="457.36" y="497.30" width="106.40" height="58.97" rx="3" fill="rgba(255,255,255,0.8)" stroke="rgba(204,204,204,0.8)" stroke-width="1.5"/><line x1="462.24" y1="510.29" x2="500.41" y2="510.29" stroke="#2e7fbf" stroke-width="2.7"/><line x1="462.24" y1="537.42" x2="500.41" y2="537.42" stroke="#fd8a2a" stroke-width="2.7"/><rect x="426.50" y="458.60" width="166.30" height="106.80" fill="none" stroke="#383838" stroke-width="1.8"/><line x1="420.00" y1="483.49" x2="426.50" y2="483.49" stroke="#383838" stroke-width="1.8"/><line x1="420.00" y1="537.09" x2="426.50" y2="537.09" stroke="#383838" stroke-width="1.8"/><line x1="439.49" y1="565.40" x2="439.49" y2="571.90" stroke="#383838" stroke-width="1.8"/><line x1="525.59" y1="565.40" x2="525.59" y2="571.90" stroke="#383838" stroke-width="1.8"/><clipPath id="tclip11"><rect x="642.80" y="458.60" width="166.00" height="106.80"/></clipPath><polyline clip-path="url(#tclip11)" points="656.31,515.98 657.93,512.40 659.55,511.92 787.88,511.92 789.02,508.67 787.88,502.98 800.88,468.87 798.44,467.24 731.84,462.05" fill="none" stroke="#2e7fbf" stroke-width="2.7" stroke-linejoin="round" stroke-linecap="square"/><polyline clip-path="url(#tclip11)" points="649.00,561.46 652.24,552.53 653.06,541.97 655.49,520.85 657.12,513.54 660.37,510.78 671.74,511.10 782.20,524.91 783.50,522.47 782.52,516.79 789.51,478.62 761.08,473.74 728.59,471.31" fill="none" stroke="#fd8a2a" stroke-width="2.7" stroke-linejoin="round" stroke-linecap="square"/><rect x="670.93" y="497.30" width="108.84" height="58.97" rx="3" fill="rgba(255,255,255,0.8)" stroke="rgba(204,204,204,0.8)" stroke-width="1.5"/><line x1="675.80" y1="510.29" x2="713.97" y2="510.29" stroke="#2e7fbf" stroke-width="2.7"/><line x1="675.80" y1="537.42" x2="713.97" y2="537.42" stroke="#fd8a2a" stroke-width="2.7"/><rect x="642.80" y="458.60" width="166.00" height="106.80" fill="none" stroke="#383838" stroke-width="1.8"/><line x1="636.30" y1="483.49" x2="642.80" y2="483.49" stroke="#383838" stroke-width="1.8"/><line x1="636.30" y1="537.09" x2="642.80" y2="537.09" stroke="#383838" stroke-width="1.8"/><line x1="655.49" y1="565.40" x2="655.49" y2="571.90" stroke="#383838" stroke-width="1.8"/><line x1="738.34" y1="565.40" x2="738.34" y2="571.90" stroke="#383838" stroke-width="1.8"/><clipPath id="tclip21"><rect x="859.00" y="458.60" width="165.70" height="106.80"/></clipPath><polyline clip-path="url(#tclip21)" points="870.68,515.98 872.31,512.40 874.74,511.92 1003.07,511.92 1004.70,508.67 1003.07,502.98 1016.07,468.87 1013.63,467.24 947.03,462.05" fill="none" stroke="#2e7fbf" stroke-width="2.7" stroke-linejoin="round" stroke-linecap="square"/><polyline clip-path="url(#tclip21)" points="864.18,561.46 867.43,552.53 868.24,541.97 870.68,520.85 872.31,513.54 875.55,510.78 886.11,511.10 996.57,525.40 998.20,522.47 996.57,516.79 1004.70,478.62 977.08,473.74 944.59,471.31" fill="none" stroke="#fd8a2a" stroke-width="2.7" stroke-linejoin="round" stroke-linecap="square"/><rect x="886.93" y="497.30" width="108.02" height="58.97" rx="3" fill="rgba(255,255,255,0.8)" stroke="rgba(204,204,204,0.8)" stroke-width="1.5"/><line x1="891.80" y1="510.29" x2="929.97" y2="510.29" stroke="#2e7fbf" stroke-width="2.7"/><line x1="891.80" y1="537.42" x2="929.97" y2="537.42" stroke="#fd8a2a" stroke-width="2.7"/><rect x="859.00" y="458.60" width="165.70" height="106.80" fill="none" stroke="#383838" stroke-width="1.8"/><line x1="852.50" y1="481.05" x2="859.00" y2="481.05" stroke="#383838" stroke-width="1.8"/><line x1="852.50" y1="537.09" x2="859.00" y2="537.09" stroke="#383838" stroke-width="1.8"/><line x1="869.06" y1="565.40" x2="869.06" y2="571.90" stroke="#383838" stroke-width="1.8"/><line x1="954.34" y1="565.40" x2="954.34" y2="571.90" stroke="#383838" stroke-width="1.8"/><clipPath id="tclip02"><rect x="426.50" y="597.60" width="166.30" height="108.00"/></clipPath><polyline clip-path="url(#tclip02)" points="440.31,654.98 441.93,651.40 443.55,650.92 571.88,650.92 573.02,647.67 571.88,641.98 584.88,607.87 582.44,606.24 515.84,601.05" fill="none" stroke="#2e7fbf" stroke-width="2.7" stroke-linejoin="round" stroke-linecap="square"/><polyline clip-path="url(#tclip02)" points="433.00,700.46 436.24,691.53 437.06,680.97 439.49,659.85 441.12,652.54 444.37,649.78 452.49,649.78 566.20,664.40 567.82,661.47 566.52,655.79 574.32,617.62 545.08,612.74 513.40,610.31" fill="none" stroke="#fd8a2a" stroke-width="2.7" stroke-linejoin="round" stroke-linecap="square"/><rect x="457.36" y="637.43" width="106.40" height="59.45" rx="3" fill="rgba(255,255,255,0.8)" stroke="rgba(204,204,204,0.8)" stroke-width="1.5"/><line x1="462.24" y1="650.43" x2="500.41" y2="650.43" stroke="#2e7fbf" stroke-width="2.7"/><line x1="462.24" y1="677.56" x2="500.41" y2="677.56" stroke="#fd8a2a" stroke-width="2.7"/><rect x="426.50" y="597.60" width="166.30" height="108.00" fill="none" stroke="#383838" stroke-width="1.8"/><line x1="420.00" y1="621.68" x2="426.50" y2="621.68" stroke="#383838" stroke-width="1.8"/><line x1="420.00" y1="676.91" x2="426.50" y2="676.91" stroke="#383838" stroke-width="1.8"/><line x1="439.49" y1="705.60" x2="439.49" y2="712.10" stroke="#383838" stroke-width="1.8"/><line x1="525.26" y1="705.60" x2="525.26" y2="712.10" stroke="#383838" stroke-width="1.8"/><clipPath id="tclip12"><rect x="642.80" y="597.60" width="166.00" height="108.00"/></clipPath><polyline clip-path="url(#tclip12)" points="655.82,654.98 657.44,651.73 782.20,651.40 787.88,650.92 787.07,643.61 800.07,608.68 797.63,606.73 730.22,601.37" fill="none" stroke="#2e7fbf" stroke-width="2.7" stroke-linejoin="round" stroke-linecap="square"/><polyline clip-path="url(#tclip12)" points="648.18,700.46 652.24,689.09 653.87,674.47 656.31,654.98 658.74,651.73 670.11,651.73 778.95,665.05 778.95,653.35 785.45,620.05 752.96,615.99 726.16,613.07" fill="none" stroke="#fd8a2a" stroke-width="2.7" stroke-linejoin="round" stroke-linecap="square"/><rect x="670.93" y="637.43" width="108.02" height="59.45" rx="3" fill="rgba(255,255,255,0.8)" stroke="rgba(204,204,204,0.8)" stroke-width="1.5"/><line x1="675.80" y1="650.43" x2="713.97" y2="650.43" stroke="#2e7fbf" stroke-width="2.7"/><line x1="675.80" y1="677.56" x2="713.97" y2="677.56" stroke="#fd8a2a" stroke-width="2.7"/><rect x="642.80" y="597.60" width="166.00" height="108.00" fill="none" stroke="#383838" stroke-width="1.8"/><line x1="636.30" y1="623.30" x2="642.80" y2="623.30" stroke="#383838" stroke-width="1.8"/><line x1="636.30" y1="676.91" x2="642.80" y2="676.91" stroke="#383838" stroke-width="1.8"/><line x1="653.06" y1="705.60" x2="653.06" y2="712.10" stroke="#383838" stroke-width="1.8"/><line x1="737.04" y1="705.60" x2="737.04" y2="712.10" stroke="#383838" stroke-width="1.8"/><clipPath id="tclip22"><rect x="859.00" y="597.60" width="165.70" height="108.00"/></clipPath><polyline clip-path="url(#tclip22)" points="871.82,654.98 873.44,651.73 994.95,651.40 1003.88,650.92 1003.07,643.61 1016.07,608.68 1013.63,606.73 947.03,601.37" fill="none" stroke="#2e7fbf" stroke-width="2.7" stroke-linejoin="round" stroke-linecap="square"/><polyline clip-path="url(#tclip22)" points="864.18,700.46 868.24,689.09 869.87,674.47 872.31,654.98 874.74,651.73 886.11,651.73 991.70,665.05 994.95,646.86 999.82,620.05 968.96,615.99 941.34,613.55" fill="none" stroke="#fd8a2a" stroke-width="2.7" stroke-linejoin="round" stroke-linecap="square"/><rect x="886.93" y="637.43" width="107.70" height="59.45" rx="3" fill="rgba(255,255,255,0.8)" stroke="rgba(204,204,204,0.8)" stroke-width="1.5"/><line x1="891.80" y1="650.43" x2="929.97" y2="650.43" stroke="#2e7fbf" stroke-width="2.7"/><line x1="891.80" y1="677.56" x2="929.97" y2="677.56" stroke="#fd8a2a" stroke-width="2.7"/><rect x="859.00" y="597.60" width="165.70" height="108.00" fill="none" stroke="#383838" stroke-width="1.8"/><line x1="852.50" y1="623.30" x2="859.00" y2="623.30" stroke="#383838" stroke-width="1.8"/><line x1="852.50" y1="676.91" x2="859.00" y2="676.91" stroke="#383838" stroke-width="1.8"/><line x1="869.06" y1="705.60" x2="869.06" y2="712.10" stroke="#383838" stroke-width="1.8"/><line x1="953.04" y1="705.60" x2="953.04" y2="712.10" stroke="#383838" stroke-width="1.8"/><rect x="443.1" y="293.6" width="133.1" height="14" fill="#777"/><rect x="381.9" y="333.1" width="29.8" height="14" fill="#999"/><rect x="401.4" y="388.6" width="10.3" height="14" fill="#999"/><rect x="509.5" y="366.4" width="38" height="13" fill="#888"/><rect x="509.5" y="393.4" width="38" height="13" fill="#888"/><rect x="693.8" y="293.6" width="64.1" height="14" fill="#777"/><rect x="598.2" y="329.0" width="29.8" height="14" fill="#999"/><rect x="617.7" y="388.6" width="10.3" height="14" fill="#999"/><rect x="723.1" y="366.4" width="38" height="13" fill="#888"/><rect x="723.1" y="393.4" width="38" height="13" fill="#888"/><rect x="922.2" y="293.6" width="39.3" height="14" fill="#777"/><rect x="814.4" y="338.7" width="29.8" height="14" fill="#999"/><rect x="833.9" y="390.7" width="10.3" height="14" fill="#999"/><rect x="961.0" y="366.4" width="38" height="13" fill="#888"/><rect x="961.0" y="393.4" width="38" height="13" fill="#888"/><rect x="433.8" y="434.6" width="151.6" height="14" fill="#777"/><rect x="381.9" y="476.5" width="29.8" height="14" fill="#999"/><rect x="401.4" y="530.1" width="10.3" height="14" fill="#999"/><rect x="509.5" y="505.3" width="38" height="13" fill="#888"/><rect x="509.5" y="532.3" width="38" height="13" fill="#888"/><rect x="676.2" y="434.6" width="99.2" height="14" fill="#777"/><rect x="598.2" y="476.5" width="29.8" height="14" fill="#999"/><rect x="617.7" y="530.1" width="10.3" height="14" fill="#999"/><rect x="723.1" y="505.3" width="38" height="13" fill="#888"/><rect x="723.1" y="532.3" width="38" height="13" fill="#888"/><rect x="850.4" y="434.6" width="183.0" height="14" fill="#777"/><rect x="814.4" y="474.1" width="29.8" height="14" fill="#999"/><rect x="833.9" y="530.1" width="10.3" height="14" fill="#999"/><rect x="939.1" y="505.3" width="38" height="13" fill="#888"/><rect x="939.1" y="532.3" width="38" height="13" fill="#888"/><rect x="466.7" y="573.6" width="85.9" height="14" fill="#777"/><rect x="381.9" y="614.7" width="29.8" height="14" fill="#999"/><rect x="401.4" y="669.9" width="10.3" height="14" fill="#999"/><rect x="509.5" y="645.4" width="38" height="13" fill="#888"/><rect x="509.5" y="672.4" width="38" height="13" fill="#888"/><rect x="676.2" y="573.6" width="99.2" height="14" fill="#777"/><rect x="598.2" y="616.3" width="29.8" height="14" fill="#999"/><rect x="617.7" y="669.9" width="10.3" height="14" fill="#999"/><rect x="723.1" y="645.4" width="38" height="13" fill="#888"/><rect x="723.1" y="672.4" width="38" height="13" fill="#888"/><rect x="914.0" y="573.6" width="55.8" height="14" fill="#777"/><rect x="814.4" y="616.3" width="29.8" height="14" fill="#999"/><rect x="833.9" y="669.9" width="10.3" height="14" fill="#999"/><rect x="939.1" y="645.4" width="38" height="13" fill="#888"/><rect x="939.1" y="672.4" width="38" height="13" fill="#888"/></svg><div class="t" style="left:514.11px;top:365.00px;font-family:'Liberation Sans',sans-serif;font-size:19.60px;line-height:19.60px;color:#333333;transform:scaleX(0.9932);">pred</div>
<div class="t" style="left:515.23px;top:392.00px;font-family:'Liberation Sans',sans-serif;font-size:19.60px;line-height:19.60px;color:#333333;transform:scaleX(1.0000);">valid</div>
<div class="t" style="left:380.94px;top:332.00px;font-family:'Liberation Sans',sans-serif;font-size:19.60px;line-height:19.60px;color:#333333;transform:scaleX(0.9613);">200</div>
<div class="t" style="left:400.58px;top:388.00px;font-family:'Liberation Sans',sans-serif;font-size:19.60px;line-height:19.60px;color:#333333;transform:scaleX(1.0987);">0</div>
<div class="t" style="left:433.52px;top:438.00px;font-family:'Liberation Sans',sans-serif;font-size:19.60px;line-height:19.60px;color:#333333;transform:scaleX(1.0987);">0</div>
<div class="t" style="left:510.54px;top:438.00px;font-family:'Liberation Sans',sans-serif;font-size:19.60px;line-height:19.60px;color:#333333;transform:scaleX(0.9613);">200</div>
<div class="t" style="left:440.81px;top:290.00px;font-family:'Liberation Sans',sans-serif;font-size:23.00px;line-height:23.00px;color:#333333;transform:scaleX(1.0102);">DecisionTree</div>
<div class="t" style="left:727.68px;top:365.00px;font-family:'Liberation Sans',sans-serif;font-size:19.60px;line-height:19.60px;color:#333333;transform:scaleX(0.9932);">pred</div>
<div class="t" style="left:728.79px;top:392.00px;font-family:'Liberation Sans',sans-serif;font-size:19.60px;line-height:19.60px;color:#333333;transform:scaleX(1.0000);">valid</div>
<div class="t" style="left:597.24px;top:328.00px;font-family:'Liberation Sans',sans-serif;font-size:19.60px;line-height:19.60px;color:#333333;transform:scaleX(0.9613);">200</div>
<div class="t" style="left:616.88px;top:388.00px;font-family:'Liberation Sans',sans-serif;font-size:19.60px;line-height:19.60px;color:#333333;transform:scaleX(1.0987);">0</div>
<div class="t" style="left:649.52px;top:438.00px;font-family:'Liberation Sans',sans-serif;font-size:19.60px;line-height:19.60px;color:#333333;transform:scaleX(1.0987);">0</div>
<div class="t" style="left:730.60px;top:438.00px;font-family:'Liberation Sans',sans-serif;font-size:19.60px;line-height:19.60px;color:#333333;transform:scaleX(0.9613);">200</div>
<div class="t" style="left:690.75px;top:290.00px;font-family:'Liberation Sans',sans-serif;font-size:23.00px;line-height:23.00px;color:#333333;transform:scaleX(1.0402);">Linear</div>
<div class="t" style="left:965.61px;top:365.00px;font-family:'Liberation Sans',sans-serif;font-size:19.60px;line-height:19.60px;color:#333333;transform:scaleX(0.9932);">pred</div>
<div class="t" style="left:966.72px;top:392.00px;font-family:'Liberation Sans',sans-serif;font-size:19.60px;line-height:19.60px;color:#333333;transform:scaleX(1.0000);">valid</div>
<div class="t" style="left:813.44px;top:338.00px;font-family:'Liberation Sans',sans-serif;font-size:19.60px;line-height:19.60px;color:#333333;transform:scaleX(0.9613);">200</div>
<div class="t" style="left:833.08px;top:390.00px;font-family:'Liberation Sans',sans-serif;font-size:19.60px;line-height:19.60px;color:#333333;transform:scaleX(1.0987);">0</div>
<div class="t" style="left:863.57px;top:438.00px;font-family:'Liberation Sans',sans-serif;font-size:19.60px;line-height:19.60px;color:#333333;transform:scaleX(1.0987);">0</div>
<div class="t" style="left:933.60px;top:438.00px;font-family:'Liberation Sans',sans-serif;font-size:19.60px;line-height:19.60px;color:#333333;transform:scaleX(0.9613);">200</div>
<div class="t" style="left:919.93px;top:290.00px;font-family:'Liberation Sans',sans-serif;font-size:23.00px;line-height:23.00px;color:#333333;transform:scaleX(0.8709);">SVR</div>
<div class="t" style="left:514.11px;top:504.00px;font-family:'Liberation Sans',sans-serif;font-size:19.60px;line-height:19.60px;color:#333333;transform:scaleX(0.9932);">pred</div>
<div class="t" style="left:515.23px;top:531.00px;font-family:'Liberation Sans',sans-serif;font-size:19.60px;line-height:19.60px;color:#333333;transform:scaleX(1.0000);">valid</div>
<div class="t" style="left:380.94px;top:475.00px;font-family:'Liberation Sans',sans-serif;font-size:19.60px;line-height:19.60px;color:#333333;transform:scaleX(0.9613);">200</div>
<div class="t" style="left:400.58px;top:529.00px;font-family:'Liberation Sans',sans-serif;font-size:19.60px;line-height:19.60px;color:#333333;transform:scaleX(1.0987);">0</div>
<div class="t" style="left:433.52px;top:577.00px;font-family:'Liberation Sans',sans-serif;font-size:19.60px;line-height:19.60px;color:#333333;transform:scaleX(1.0987);">0</div>
<div class="t" style="left:509.73px;top:577.00px;font-family:'Liberation Sans',sans-serif;font-size:19.60px;line-height:19.60px;color:#333333;transform:scaleX(0.9613);">200</div>
<div class="t" style="left:430.51px;top:431.00px;font-family:'Liberation Sans',sans-serif;font-size:23.00px;line-height:23.00px;color:#333333;transform:scaleX(1.0098);">RandomForest</div>
<div class="t" style="left:727.68px;top:504.00px;font-family:'Liberation Sans',sans-serif;font-size:19.60px;line-height:19.60px;color:#333333;transform:scaleX(0.9932);">pred</div>
<div class="t" style="left:728.79px;top:531.00px;font-family:'Liberation Sans',sans-serif;font-size:19.60px;line-height:19.60px;color:#333333;transform:scaleX(1.0000);">valid</div>
<div class="t" style="left:597.24px;top:475.00px;font-family:'Liberation Sans',sans-serif;font-size:19.60px;line-height:19.60px;color:#333333;transform:scaleX(0.9613);">200</div>
<div class="t" style="left:616.88px;top:529.00px;font-family:'Liberation Sans',sans-serif;font-size:19.60px;line-height:19.60px;color:#333333;transform:scaleX(1.0987);">0</div>
<div class="t" style="left:649.52px;top:577.00px;font-family:'Liberation Sans',sans-serif;font-size:19.60px;line-height:19.60px;color:#333333;transform:scaleX(1.0987);">0</div>
<div class="t" style="left:722.48px;top:577.00px;font-family:'Liberation Sans',sans-serif;font-size:19.60px;line-height:19.60px;color:#333333;transform:scaleX(0.9613);">200</div>
<div class="t" style="left:674.10px;top:431.00px;font-family:'Liberation Sans',sans-serif;font-size:23.00px;line-height:23.00px;color:#333333;transform:scaleX(0.9957);">AdaBoost</div>
<div class="t" style="left:943.68px;top:504.00px;font-family:'Liberation Sans',sans-serif;font-size:19.60px;line-height:19.60px;color:#333333;transform:scaleX(0.9932);">pred</div>
<div class="t" style="left:944.79px;top:531.00px;font-family:'Liberation Sans',sans-serif;font-size:19.60px;line-height:19.60px;color:#333333;transform:scaleX(1.0000);">valid</div>
<div class="t" style="left:813.44px;top:473.00px;font-family:'Liberation Sans',sans-serif;font-size:19.60px;line-height:19.60px;color:#333333;transform:scaleX(0.9613);">200</div>
<div class="t" style="left:833.08px;top:529.00px;font-family:'Liberation Sans',sans-serif;font-size:19.60px;line-height:19.60px;color:#333333;transform:scaleX(1.0987);">0</div>
<div class="t" style="left:863.08px;top:577.00px;font-family:'Liberation Sans',sans-serif;font-size:19.60px;line-height:19.60px;color:#333333;transform:scaleX(1.0987);">0</div>
<div class="t" style="left:938.48px;top:577.00px;font-family:'Liberation Sans',sans-serif;font-size:19.60px;line-height:19.60px;color:#333333;transform:scaleX(0.9613);">200</div>
<div class="t" style="left:848.62px;top:431.00px;font-family:'Liberation Sans',sans-serif;font-size:23.00px;line-height:23.00px;color:#333333;transform:scaleX(1.0450);">GradientBoosting</div>
<div class="t" style="left:514.11px;top:644.00px;font-family:'Liberation Sans',sans-serif;font-size:19.60px;line-height:19.60px;color:#333333;transform:scaleX(0.9932);">pred</div>
<div class="t" style="left:515.23px;top:671.00px;font-family:'Liberation Sans',sans-serif;font-size:19.60px;line-height:19.60px;color:#333333;transform:scaleX(1.0000);">valid</div>
<div class="t" style="left:380.94px;top:614.00px;font-family:'Liberation Sans',sans-serif;font-size:19.60px;line-height:19.60px;color:#333333;transform:scaleX(0.9613);">200</div>
<div class="t" style="left:400.58px;top:669.00px;font-family:'Liberation Sans',sans-serif;font-size:19.60px;line-height:19.60px;color:#333333;transform:scaleX(1.0987);">0</div>
<div class="t" style="left:433.52px;top:717.00px;font-family:'Liberation Sans',sans-serif;font-size:19.60px;line-height:19.60px;color:#333333;transform:scaleX(1.0987);">0</div>
<div class="t" style="left:509.40px;top:717.00px;font-family:'Liberation Sans',sans-serif;font-size:19.60px;line-height:19.60px;color:#333333;transform:scaleX(0.9613);">200</div>
<div class="t" style="left:463.51px;top:570.00px;font-family:'Liberation Sans',sans-serif;font-size:23.00px;line-height:23.00px;color:#333333;transform:scaleX(1.0589);">Bagging</div>
<div class="t" style="left:727.68px;top:644.00px;font-family:'Liberation Sans',sans-serif;font-size:19.60px;line-height:19.60px;color:#333333;transform:scaleX(0.9932);">pred</div>
<div class="t" style="left:728.79px;top:671.00px;font-family:'Liberation Sans',sans-serif;font-size:19.60px;line-height:19.60px;color:#333333;transform:scaleX(1.0000);">valid</div>
<div class="t" style="left:597.24px;top:615.00px;font-family:'Liberation Sans',sans-serif;font-size:19.60px;line-height:19.60px;color:#333333;transform:scaleX(0.9613);">200</div>
<div class="t" style="left:616.88px;top:669.00px;font-family:'Liberation Sans',sans-serif;font-size:19.60px;line-height:19.60px;color:#333333;transform:scaleX(1.0987);">0</div>
<div class="t" style="left:647.08px;top:717.00px;font-family:'Liberation Sans',sans-serif;font-size:19.60px;line-height:19.60px;color:#333333;transform:scaleX(1.0987);">0</div>
<div class="t" style="left:721.18px;top:717.00px;font-family:'Liberation Sans',sans-serif;font-size:19.60px;line-height:19.60px;color:#333333;transform:scaleX(0.9613);">200</div>
<div class="t" style="left:672.19px;top:570.00px;font-family:'Liberation Sans',sans-serif;font-size:23.00px;line-height:23.00px;color:#333333;transform:scaleX(1.0201);">ExtraTree</div>
<div class="t" style="left:943.68px;top:644.00px;font-family:'Liberation Sans',sans-serif;font-size:19.60px;line-height:19.60px;color:#333333;transform:scaleX(0.9932);">pred</div>
<div class="t" style="left:944.79px;top:671.00px;font-family:'Liberation Sans',sans-serif;font-size:19.60px;line-height:19.60px;color:#333333;transform:scaleX(1.0000);">valid</div>
<div class="t" style="left:813.44px;top:615.00px;font-family:'Liberation Sans',sans-serif;font-size:19.60px;line-height:19.60px;color:#333333;transform:scaleX(0.9613);">200</div>
<div class="t" style="left:833.08px;top:669.00px;font-family:'Liberation Sans',sans-serif;font-size:19.60px;line-height:19.60px;color:#333333;transform:scaleX(1.0987);">0</div>
<div class="t" style="left:863.08px;top:717.00px;font-family:'Liberation Sans',sans-serif;font-size:19.60px;line-height:19.60px;color:#333333;transform:scaleX(1.0987);">0</div>
<div class="t" style="left:937.18px;top:717.00px;font-family:'Liberation Sans',sans-serif;font-size:19.60px;line-height:19.60px;color:#333333;transform:scaleX(0.9613);">200</div>
<div class="t" style="left:909.77px;top:570.00px;font-family:'Liberation Sans',sans-serif;font-size:23.00px;line-height:23.00px;color:#333333;transform:scaleX(1.0309);">Mean</div><svg class="r" style="left:573.5px;top:360px" width="12" height="17" viewBox="0 0 12 17"><path d="M0.6 0.6 L0.6 14 L3.9 10.9 L6.2 16.2 L8.4 15.2 L6.1 10.1 L10.6 10.1 Z" fill="#ffffff" stroke="#222" stroke-width="1.1" stroke-linejoin="round"/></svg><svg class="r" style="left:861.5px;top:528px" width="12" height="17" viewBox="0 0 12 17"><path d="M0.6 0.6 L0.6 14 L3.9 10.9 L6.2 16.2 L8.4 15.2 L6.1 10.1 L10.6 10.1 Z" fill="#ffffff" stroke="#222" stroke-width="1.1" stroke-linejoin="round"/></svg>
</body></html>
